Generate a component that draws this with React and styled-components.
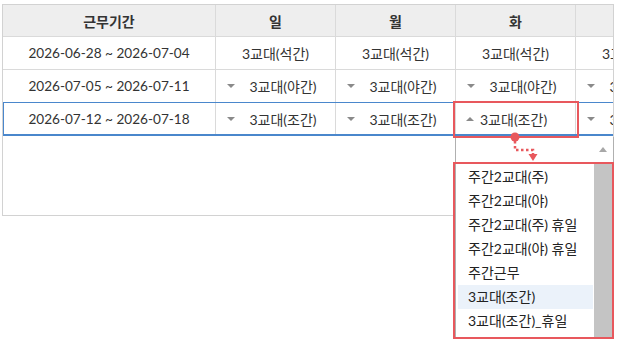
import React from "react";
import styled, { createGlobalStyle } from "styled-components";

const Global = createGlobalStyle`
  html, body { margin: 0; padding: 0; background: #fff; }
  body { font-family: "Lato", "Noto Sans CJK KR", sans-serif; color: #333; }
  * { box-sizing: border-box; }
`;

const RED = "#e8585d";
const BLUE = "#4a87cc";

const Page = styled.div`
  position: relative;
  width: 618px;
  height: 339px;
  overflow: hidden;
  padding: 4px 0 0 2px;
`;

const Grid = styled.div`
  width: 612px;
  height: 212px;
  border: 1px solid #d2d2d2;
  overflow: hidden;
  display: flex;
  flex-direction: column;
`;

const Row = styled.div`
  display: grid;
  grid-template-columns: 213px 120px 120px 120px 120px;
  height: ${(p) => (p.$header ? 32 : 33)}px;
  flex: none;
  background: ${(p) => (p.$header ? "#eeeeee" : "#fff")};
  border-bottom: 1px solid ${(p) => (p.$selected ? BLUE : "#dadada")};
  ${(p) =>
    p.$selected &&
    `border-top: 1px solid ${BLUE}; border-bottom-width: 2px; box-shadow: inset 1px 0 0 ${BLUE}; height: 34px; margin-top: -1px;`}
`;

const Cell = styled.div`
  display: flex;
  align-items: center;
  justify-content: ${(p) => (p.$open ? "flex-start" : "center")};
  border-right: 1px solid #dadada;
  font-size: ${(p) => (p.$date ? "13.6px" : "14px")};
  font-weight: ${(p) => (p.$header ? 700 : 400)};
  color: #333;
  white-space: nowrap;
  overflow: hidden;
  padding: ${(p) => (p.$open ? "0 4px 0 10px" : p.$combo ? "0 4px 0 11px" : "0")};
`;

const Arrow = styled.span`
  flex: none;
  width: 0;
  height: 0;
  border-left: 4px solid transparent;
  border-right: 4px solid transparent;
  ${(p) =>
    p.$up
      ? "border-bottom: 4px solid #8a8a8a;"
      : "border-top: 4px solid #8a8a8a;"}
  margin-right: ${(p) => (p.$up ? "6px" : "0")};
`;

const ComboText = styled.span`
  flex: ${(p) => (p.$open ? "none" : "1")};
  text-align: center;
`;

const Body = styled.div`
  flex: 1;
`;

const Popup = styled.div`
  position: absolute;
  left: 455px;
  top: 137px;
  width: 159px;
  height: 220px;
  border: 1px solid #b0b0b0;
  border-top: none;
  background: #fff;
  display: flex;
`;

const List = styled.ul`
  list-style: none;
  margin: 0;
  padding: 28px 1px 0 2px;
  flex: 1;
`;

const Item = styled.li`
  height: 24px;
  line-height: 24px;
  padding-left: 10px;
  font-size: 14px;
  color: #222;
  white-space: nowrap;
  background: ${(p) => (p.$active ? "#ebf2fa" : "transparent")};
`;

const Scrollbar = styled.div`
  width: 18px;
  flex: none;
  display: flex;
  flex-direction: column;
  margin-right: 1px;
`;

const ScrollUp = styled.div`
  height: 25px;
  display: flex;
  align-items: center;
  justify-content: center;
  background: #fff;
`;

const Thumb = styled.div`
  flex: 1;
  background: #c4c4c4;
`;

const HighlightBox = styled.div`
  position: absolute;
  left: ${(p) => p.$x}px;
  top: ${(p) => p.$y}px;
  width: ${(p) => p.$w}px;
  height: ${(p) => p.$h}px;
  border: 2px solid ${RED};
  pointer-events: none;
`;

const Connector = styled.svg`
  position: absolute;
  left: 508px;
  top: 130px;
  overflow: visible;
`;

const days = ["일", "월", "화", "수"];

const rows = [
  { range: "2026-06-28 ~ 2026-07-04", val: "3교대(석간)", combo: false },
  { range: "2026-07-05 ~ 2026-07-11", val: "3교대(야간)", combo: true },
  { range: "2026-07-12 ~ 2026-07-18", val: "3교대(조간)", combo: true, selected: true },
];

const options = [
  "주간2교대(주)",
  "주간2교대(야)",
  "주간2교대(주) 휴일",
  "주간2교대(야) 휴일",
  "주간근무",
  "3교대(조간)",
  "3교대(조간)_휴일",
  "3교대(석간)",
];

export default function App() {
  return (
    <>
      <Global />
      <Page>
        <Grid>
          <Row $header>
            <Cell $header>근무기간</Cell>
            {days.map((d) => (
              <Cell $header key={d}>
                {d}
              </Cell>
            ))}
          </Row>
          {rows.map((r, ri) => (
            <Row key={ri} $selected={r.selected}>
              <Cell $date>{r.range}</Cell>
              {days.map((d, di) => {
                const open = r.selected && di === 2;
                if (!r.combo) return <Cell key={d}>{r.val}</Cell>;
                return (
                  <Cell key={d} $combo $open={open}>
                    <Arrow $up={open} />
                    <ComboText $open={open}>{r.val}</ComboText>
                  </Cell>
                );
              })}
            </Row>
          ))}
          <Body />
        </Grid>

        <Popup>
          <List>
            {options.map((o) => (
              <Item key={o} $active={o === "3교대(조간)"}>
                {o}
              </Item>
            ))}
          </List>
          <Scrollbar>
            <ScrollUp>
              <svg width="8" height="5" viewBox="0 0 8 5">
                <path d="M0 5 L4 0 L8 5 Z" fill="#a8a8a8" />
              </svg>
            </ScrollUp>
            <Thumb />
          </Scrollbar>
        </Popup>

        <HighlightBox $x={453} $y={101} $w={126} $h={37} />
        <HighlightBox $x={453} $y={162} $w={161} $h={177} />
        <Connector width="40" height="35" viewBox="0 0 40 35">
          <circle cx="7" cy="7" r="4.5" fill={RED} />
          <path
            d="M7 11 V20 H25 V24"
            fill="none"
            stroke={RED}
            strokeWidth="2.5"
            strokeDasharray="2.5 2.5"
          />
          <path d="M20.5 24 L29.5 24 L25 31 Z" fill={RED} />
        </Connector>
      </Page>
    </>
  );
}
